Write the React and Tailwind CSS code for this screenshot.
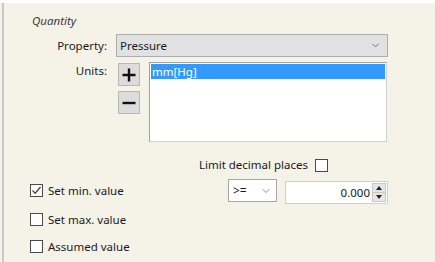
import { ChevronDown } from 'lucide-react';

function Check({ checked }) {
  return (
    <span className="w-[13px] h-[13px] border border-[#4a4a4a] bg-white flex items-center justify-center shrink-0">
      {checked && (
        <svg width="11" height="11" viewBox="0 0 11 11">
          <path d="M1.5 5.5 L4.2 8.2 L9.5 2" fill="none" stroke="#444" strokeWidth="1.3" />
        </svg>
      )}
    </span>
  );
}

export default function App() {
  return (
    <div
      className="w-[435px] h-[262px] bg-white pt-[3px] overflow-hidden text-[11.5px] text-[#1a1a1a]"
      style={{ fontFamily: '"Noto Sans", "Open Sans", sans-serif' }}
    >
      <div className="h-full bg-[#f5f2e8] pl-[2px]">
        <div className="h-full border-l-2 border-[#c9c9c9] bg-[#f5f2e8]">
          {/* Quantity heading */}
          <div className="pl-[28px] pt-[10px] h-[31px] italic text-[11.5px] leading-[15px] text-[#3a3a3a]">
            Quantity
          </div>

          {/* Property */}
          <div className="flex items-center h-[23px]">
            <div className="w-[103px] text-right leading-[15px]">Property:</div>
            <div className="ml-[9px] w-[272px] h-[23px] bg-[#e1e1e1] border border-[#adadad] flex items-center justify-between pl-[3px] pr-[6px]">
              <span className="leading-[15px]">Pressure</span>
              <ChevronDown className="w-[11px] h-[11px] text-[#666]" strokeWidth={2} />
            </div>
          </div>

          {/* Units */}
          <div className="flex mt-[5px]">
            <div className="w-[103px] text-right leading-[15px] pt-[1px]">Units:</div>
            <div className="ml-[11px] mt-[1px] flex flex-col gap-[5px]">
              <button className="w-[22px] h-[23px] bg-[#dcdcdc] border border-[#b8b8b8] flex items-center justify-center">
                <svg width="14" height="14" viewBox="0 0 14 14">
                  <path d="M7 0.5 V13.5 M0.5 7 H13.5" stroke="#111" strokeWidth="2.4" />
                </svg>
              </button>
              <button className="w-[22px] h-[23px] bg-[#dcdcdc] border border-[#b8b8b8] flex items-center justify-center">
                <svg width="14" height="14" viewBox="0 0 14 14">
                  <path d="M0.5 7 H13.5" stroke="#111" strokeWidth="2.4" />
                </svg>
              </button>
            </div>
            <div className="ml-[9px] w-[238px] h-[80px] bg-white border border-[#a0a0a0] border-r-[#d0d0d0] border-b-[#d0d0d0] p-[1px]">
              <div className="h-[15px] bg-[#3399ff] text-white leading-[15px] pl-[1px]">mm[Hg]</div>
            </div>
          </div>

          {/* Limit decimal places */}
          <div className="flex items-center justify-end h-[14px] mt-[16px] w-[324px]">
            <span className="leading-[14px] mr-[7px]">Limit decimal places</span>
            <Check />
          </div>

          {/* Set min value */}
          <div className="flex items-center h-[25px] mt-[6px]">
            <div className="flex items-center gap-[5px] pl-[26px] w-[224px]">
              <Check checked />
              <span className="leading-[15px]">Set min. value</span>
            </div>
            <div className="w-[49px] h-[23px] bg-white border border-[#a8a8a8] flex items-center justify-between pl-[4px] pr-[4px]">
              <span className="leading-[15px] text-[12px]">&gt;=</span>
              <ChevronDown className="w-[12px] h-[12px] text-[#666]" strokeWidth={1.5} />
            </div>
            <div className="ml-[8px] mt-[3px] w-[103px] h-[23px] bg-white border border-[#cfcfcf] flex items-center justify-end pr-[1px]">
              <span className="leading-[15px] mr-[2px]">0.000</span>
              <div className="w-[14px] h-[19px] flex flex-col border border-[#c8c8c8]">
                <div className="flex-1 bg-[#e6e6e6] flex items-center justify-center border-b border-[#c8c8c8]">
                  <svg width="6" height="4" viewBox="0 0 6 4"><path d="M0 4 L3 0 L6 4 Z" fill="#222" /></svg>
                </div>
                <div className="flex-1 bg-[#e6e6e6] flex items-center justify-center">
                  <svg width="6" height="4" viewBox="0 0 6 4"><path d="M0 0 L3 4 L6 0 Z" fill="#222" /></svg>
                </div>
              </div>
            </div>
          </div>

          {/* Set max value */}
          <div className="flex items-center gap-[5px] pl-[26px] h-[15px] mt-[9px]">
            <Check />
            <span className="leading-[15px]">Set max. value</span>
          </div>

          {/* Assumed value */}
          <div className="flex items-center gap-[5px] pl-[26px] h-[15px] mt-[12px]">
            <Check />
            <span className="leading-[15px]">Assumed value</span>
          </div>
        </div>
      </div>
    </div>
  );
}
